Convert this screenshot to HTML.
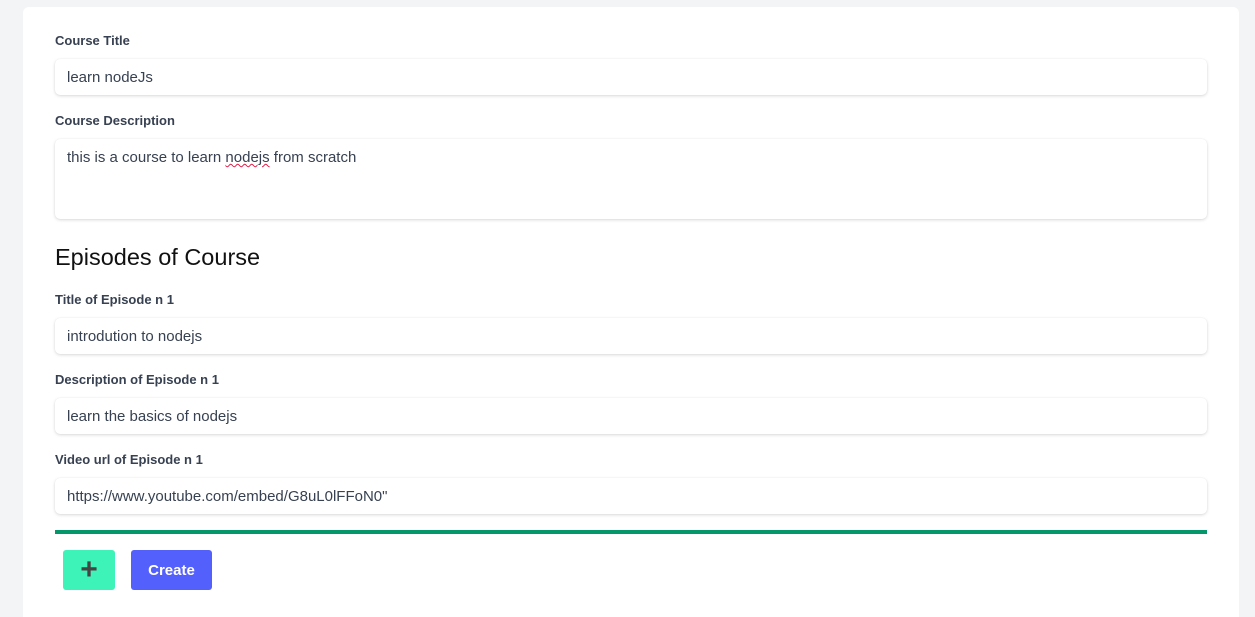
<!DOCTYPE html>
<html><head><style>
html,body{margin:0;height:617px;overflow:hidden}
body{background:#f3f4f6;font-family:"Liberation Sans",sans-serif;width:1255px;position:relative}
.card{position:absolute;left:23px;top:7px;width:1216px;height:610px;background:#fff;border-radius:6px 6px 0 0}
.l{position:absolute;left:55px;font-size:13px;font-weight:bold;color:#374151}
.i{position:absolute;left:55px;width:1152px;height:36px;background:#fff;border-radius:5px;box-shadow:0 1px 3px rgba(0,0,0,.15),0 0 1px rgba(0,0,0,.08);font-size:15px;color:#374151;box-sizing:border-box;padding-left:12px;line-height:38px}
</style></head><body>
<div class="card"></div>
<div class="l" style="top:33px">Course Title</div>
<div class="i" style="top:59px">learn nodeJs</div>
<div class="l" style="top:113px">Course Description</div>
<div class="i" style="top:139px;height:80px;line-height:normal;padding-top:10px">this is a course to learn <span style="text-decoration:underline wavy #e11d48;text-decoration-thickness:1px">nodejs</span> from scratch</div>
<div style="position:absolute;left:55px;top:244px;font-size:23.5px;color:#111">Episodes of Course</div>
<div class="l" style="top:292px">Title of Episode n 1</div>
<div class="i" style="top:318px">introdution to nodejs</div>
<div class="l" style="top:372px">Description of Episode n 1</div>
<div class="i" style="top:398px">learn the basics of nodejs</div>
<div class="l" style="top:452px">Video url of Episode n 1</div>
<div class="i" style="top:478px">https://www.youtube.com/embed/G8uL0lFFoN0"</div>
<div style="position:absolute;left:55px;top:530px;width:1152px;height:4px;background:#059669"></div>
<div style="position:absolute;left:63px;top:550px;width:52px;height:40px;background:#3ef3b7;border-radius:3px;color:#444;font-size:30px;font-weight:bold;text-align:center;line-height:40px">+</div>
<div style="position:absolute;left:131px;top:550px;width:81px;height:40px;background:#5460fb;border-radius:3px;color:#fff;font-size:15px;font-weight:bold;text-align:center;line-height:41px">Create</div>
</body></html>
